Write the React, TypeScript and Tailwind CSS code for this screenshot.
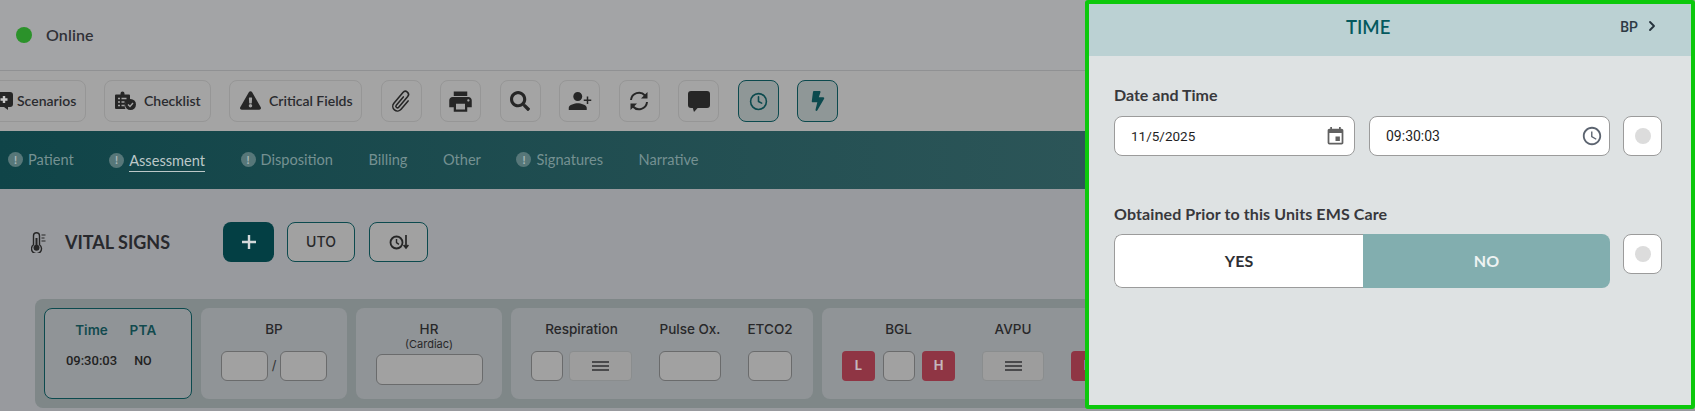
import React from "react";
import { FaExclamationTriangle, FaSearch, FaBolt } from "react-icons/fa";
import { BsPaperclip } from "react-icons/bs";
import { IoMdPersonAdd } from "react-icons/io";
import { MdEvent, MdAccessTime, MdLocalPrintshop } from "react-icons/md";
import { ChevronRight, Clock } from "lucide-react";

const ToolBtn = ({ children, active }: { children: React.ReactNode; active?: boolean }) => (
  <div
    className={
      active
        ? "w-[41px] h-[42px] shrink-0 rounded-lg border border-[#0c4a4e] bg-[#8f9797] flex items-center justify-center text-[#0c4a4e]"
        : "w-[41px] h-[42px] shrink-0 rounded-lg border border-[#969696] flex items-center justify-center text-[#262626]"
    }
  >
    {children}
  </div>
);

const Alert = () => (
  <span className="w-[15px] h-[15px] rounded-full bg-[#577779] text-[#aab9ba] text-[11px] font-bold flex items-center justify-center">!</span>
);

const Tab = ({ label, alert, active }: { label: string; alert?: boolean; active?: boolean }) => (
  <div className="flex items-center gap-[5px]">
    {alert && <Alert />}
    <span className={active ? "text-[#bcc8c8] border-b border-[#bcc8c8] leading-[19px] mt-[3px] pb-[1px]" : "text-[#759192]"}>{label}</span>
  </div>
);

const Menu = () => (
  <div className="h-[30px] rounded border border-[#8a8d8e] bg-[#9d9d9d] flex flex-col gap-[2px] items-center justify-center">
    <span className="w-[17px] h-[2px] bg-[#4a4a4c]" />
    <span className="w-[17px] h-[2px] bg-[#4a4a4c]" />
    <span className="w-[17px] h-[2px] bg-[#4a4a4c]" />
  </div>
);

const Inp = ({ w }: { w: string }) => (
  <div className={`${w} h-[30px] rounded-md border border-[#6a6b6c] bg-[#a1a1a1]`} />
);

const Red = ({ t }: { t: string }) => (
  <div className="w-[33px] h-[30px] rounded bg-[#8f3544] text-[#c4b7bc] text-[13px] font-bold flex items-center justify-center">{t}</div>
);

const Label = ({ children }: { children: React.ReactNode }) => (
  <div className="text-[13.5px] font-medium leading-[16px] text-[#28282a] whitespace-nowrap mb-[14px]">{children}</div>
);

const Toggle = () => (
  <div className="w-[39px] h-[40px] shrink-0 rounded-lg border border-[#9b9b9b] bg-white flex items-center justify-center">
    <span className="w-[16px] h-[16px] rounded-full bg-[#dcdcdc]" />
  </div>
);

export default function App() {
  return (
    <div className="relative w-full h-screen overflow-hidden bg-[#989a9e] font-['Lato',sans-serif]">
      <div className="h-[70px] bg-[#a3a4a6] flex items-center pl-[16px] gap-[14px]">
        <span className="w-[16px] h-[16px] rounded-full bg-[#2b922a]" />
        <span className="text-[16px] font-semibold tracking-[0.1px] text-[#303136]">Online</span>
      </div>
      <div className="h-[61px] border-t border-[#909193] bg-[#a4a4a4] pt-[9px] flex gap-[18.5px] text-[14px] font-semibold text-[#2a2b2f] -ml-[14px]">
        <div className="w-[100px] h-[42px] shrink-0 rounded-lg border border-[#969696] flex items-center gap-[4px] pl-[8px] pb-[1px]">
          <svg width="18" height="20" viewBox="0 0 18 20" className="shrink-0">
            <rect x="0" y="1" width="18" height="15" rx="3" fill="#262626" />
            <path d="M9 16h4v3z" fill="#262626" />
            <path d="M9 5v7M5.5 8.5h7" stroke="#c8c8c8" strokeWidth="2.4" />
          </svg>
          <span>Scenarios</span>
        </div>
        <div className="w-[107px] -ml-[0.5px] h-[42px] shrink-0 rounded-lg border border-[#969696] flex items-center gap-[8px] pl-[10px] pb-[1px]">
          <svg width="21" height="19" viewBox="0 0 21 19" className="shrink-0">
            <path d="M1 3.5h4.5V2.5a2 2 0 0 1 4 0v1H14a1 1 0 0 1 1 1V9a6 6 0 0 0-4.5 9H1a1 1 0 0 1-1-1V4.5a1 1 0 0 1 1-1z" fill="#262626" />
            <path d="M3 7.5h2M6.5 7.5h5M3 11h2M6.5 11h3M3 14.5h2M6.5 14.5h3" stroke="#a4a4a4" strokeWidth="1.3" />
            <circle cx="15.5" cy="13.5" r="5.5" fill="#262626" />
            <path d="M13 13.5l2 2 3-3.5" stroke="#a4a4a4" strokeWidth="1.4" fill="none" />
          </svg>
          <span>Checklist</span>
        </div>
        <div className="w-[133px] -ml-[0.5px] h-[42px] shrink-0 rounded-lg border border-[#969696] flex items-center gap-[8px] pl-[10px] pb-[1px]">
          <FaExclamationTriangle size={21} color="#262626" className="shrink-0" />
          <span>Critical Fields</span>
        </div>
        <ToolBtn><BsPaperclip size={25} className="rotate-[40deg]" /></ToolBtn>
        <ToolBtn><MdLocalPrintshop size={27} /></ToolBtn>
        <ToolBtn><FaSearch size={20} /></ToolBtn>
        <ToolBtn><IoMdPersonAdd size={24} className="-scale-x-100" /></ToolBtn>
        <ToolBtn>
          <svg width="22" height="22" viewBox="0 0 22 22" fill="none">
            <path d="M3 10a8 8 0 0 1 14-4.5" stroke="#262626" strokeWidth="2" />
            <path d="M19.5 2v6.5H13z" fill="#262626" />
            <path d="M19 12a8 8 0 0 1-14 4.5" stroke="#262626" strokeWidth="2" />
            <path d="M2.5 20v-6.5H9z" fill="#262626" />
          </svg>
        </ToolBtn>
        <ToolBtn>
          <svg width="22" height="21" viewBox="0 0 22 21">
            <rect x="0" y="0" width="22" height="17" rx="3" fill="#262626" />
            <path d="M4.5 16h6l-4.5 5z" fill="#262626" />
          </svg>
        </ToolBtn>
        <ToolBtn active><Clock size={19} strokeWidth={2} /></ToolBtn>
        <ToolBtn active><FaBolt size={20} /></ToolBtn>
      </div>
      <div className="h-[58px] bg-gradient-to-r from-[#0f4448] to-[#3a5f61] flex items-center pl-[8px] gap-[35.5px] text-[14.6px]">
        <Tab label="Patient" alert />
        <Tab label="Assessment" alert active />
        <Tab label="Disposition" alert />
        <Tab label="Billing" />
        <Tab label="Other" />
        <Tab label="Signatures" alert />
        <Tab label="Narrative" />
      </div>

      <div className="mt-[33px] h-[40px] flex items-center pl-[31px]">
        <svg width="16" height="21" viewBox="0 0 16 21" className="shrink-0" fill="none">
          <path d="M2.5 12V3a3 3 0 0 1 6 0v9a5 5 0 1 1-6 0z" stroke="#262626" strokeWidth="1.4" transform="translate(0 .7)" />
          <circle cx="5.5" cy="15.7" r="3" fill="#262626" />
          <path d="M5.5 6v8" stroke="#262626" strokeWidth="2" />
          <path d="M10.5 3h4M10.5 6h3M10.5 9h4" stroke="#262626" strokeWidth="1.2" />
        </svg>
        <span className="ml-[18px] w-[158px] text-[18px] font-bold text-[#28292d]">VITAL SIGNS</span>
        <div className="w-[51px] h-[40px] rounded-lg bg-[#033f44] text-[#d4d9da] flex items-center justify-center">
          <svg width="14" height="14" viewBox="0 0 14 14"><path d="M7 0v14M0 7h14" stroke="currentColor" strokeWidth="2.4" /></svg>
        </div>
        <div className="ml-[13px] w-[68px] h-[40px] rounded-lg border border-[#0c4a4e] bg-[#a1a1a1] text-[14px] font-medium text-[#28282a] font-['Inter',sans-serif] flex items-center justify-center pb-[1px]">UTO</div>
        <div className="ml-[14px] w-[59px] h-[40px] rounded-lg border border-[#0c4a4e] bg-[#a1a1a1] flex items-center justify-center">
          <svg width="20" height="16" viewBox="0 0 20 16" fill="none" stroke="#262626">
            <circle cx="7.5" cy="8.5" r="6" strokeWidth="1.8" />
            <path d="M7.5 5v3.7l2.4 1.6" strokeWidth="1.4" />
            <path d="M17 1v12.5M14.6 11l2.4 3 2.4-3" strokeWidth="1.7" />
          </svg>
        </div>
      </div>

      <div className="mt-[37px] ml-[35px] w-[1100px] h-[109px] rounded-lg bg-[#7f8788] p-[9px] flex gap-[9px] font-['Inter',sans-serif]">
        <div className="w-[148px] h-[91px] shrink-0 rounded-lg border border-[#0c4a4e] pt-[13px] pl-[22px] flex gap-[12px] bg-[#909497]">
          <div className="w-[49px] flex flex-col items-center">
            <span className="text-[13.5px] font-semibold leading-[16px] text-[#124a4e] mb-[15px]">Time</span>
            <span className="text-[13px] font-medium leading-[16px] text-[#222] font-['Roboto',sans-serif] whitespace-nowrap">09:30:03</span>
          </div>
          <div className="w-[30px] flex flex-col items-center">
            <span className="text-[13.5px] font-semibold leading-[16px] tracking-[0.3px] text-[#124a4e] mb-[15px]">PTA</span>
            <span className="text-[12.5px] font-medium leading-[16px] text-[#222] font-['Roboto',sans-serif]">NO</span>
          </div>
        </div>
        <div className="w-[146px] shrink-0 rounded-lg bg-[#909497] pt-[13px] flex flex-col items-center">
          <Label>BP</Label>
          <div className="flex items-center gap-[4px] text-[13px] text-[#333]">
            <Inp w="w-[47px]" /><span>/</span><Inp w="w-[47px]" />
          </div>
        </div>
        <div className="w-[146px] shrink-0 rounded-lg bg-[#909497] pt-[13px] flex flex-col items-center">
          <div className="text-[13.5px] font-medium leading-[16px] text-[#28282a]">HR</div>
          <div className="text-[11px] leading-[15px] text-[#28282a]">(Cardiac)</div>
          <div className="mt-[2px] w-[107px] h-[31px] rounded-md border border-[#6a6b6c] bg-[#a1a1a1]" />
        </div>
        <div className="w-[302px] shrink-0 rounded-lg bg-[#909497] pt-[13px] pl-[20px] flex gap-[27px]">
          <div className="w-[101px] flex flex-col items-center">
            <Label>Respiration</Label>
            <div className="flex gap-[6px] w-full">
              <Inp w="w-[32px]" />
              <div className="flex-1"><Menu /></div>
            </div>
          </div>
          <div className="w-[62px] flex flex-col items-center">
            <Label>Pulse Ox.</Label>
            <Inp w="w-[62px]" />
          </div>
          <div className="w-[44px] flex flex-col items-center">
            <Label>ETCO2</Label>
            <Inp w="w-[44px]" />
          </div>
        </div>
        <div className="flex-1 rounded-lg bg-[#909497] pt-[13px] pl-[20px] flex gap-[27px]">
          <div className="w-[113px] flex flex-col items-center">
            <Label>BGL</Label>
            <div className="flex gap-[7.5px]">
              <Red t="L" />
              <Inp w="w-[32px]" />
              <Red t="H" />
            </div>
          </div>
          <div className="w-[62px] flex flex-col items-center">
            <Label>AVPU</Label>
            <div className="w-full"><Menu /></div>
          </div>
          <div className="pt-[30px]"><Red t="L" /></div>
        </div>
      </div>

      <div className="absolute left-[1085px] right-0 top-0 h-[409px] border-4 border-[#0cc90c] rounded-[3px] bg-[#dee2e3]">
        <div className="h-[52px] bg-[#bbd1d3] flex items-center pl-[257px] pr-[31px] pb-[5px]">
          <span className="text-[18.5px] font-semibold text-[#04595e]">TIME</span>
          <span className="ml-auto text-[14px] font-medium text-[#2e3a44] font-['Roboto',sans-serif]">BP</span>
          <ChevronRight size={16} strokeWidth={2.8} className="ml-[6px] -mt-[3px] text-[#26333d]" />
        </div>
        <div className="pl-[25px] pt-[30px]">
          <div className="text-[16px] font-bold leading-[18px] text-[#38383c]">Date and Time</div>
          <div className="mt-[12px] flex items-center font-['Roboto',sans-serif] text-[13.5px] text-[#1f1f1f]">
            <div className="w-[240.5px] h-[40px] rounded-lg border border-[#9b9b9b] bg-white flex items-center justify-between pl-[16px] pr-[8px]">
              <span>11/5/2025</span>
              <MdEvent size={21} color="#616161" />
            </div>
            <div className="ml-[14.5px] w-[241px] h-[40px] rounded-lg border border-[#9b9b9b] bg-white flex items-center justify-between pl-[16px] pr-[6px]">
              <span className="text-[14px]">09:30:03</span>
              <MdAccessTime size={22} color="#5c6470" />
            </div>
            <div className="ml-[13px]"><Toggle /></div>
          </div>
          <div className="mt-[49px] text-[16px] font-bold tracking-[0.1px] leading-[18px] text-[#38383c]">Obtained Prior to this Units EMS Care</div>
          <div className="mt-[11px] flex items-start">
            <div className="w-[496px] h-[54px] rounded-lg flex overflow-hidden text-[16px] font-bold">
              <div className="w-[249px] border border-r-0 border-[#9b9b9b] rounded-l-lg bg-white text-[#2e2f33] flex items-center justify-center">YES</div>
              <div className="flex-1 bg-[#82aeaf] text-[#eef3f3] flex items-center justify-center">NO</div>
            </div>
            <div className="ml-[13px]"><Toggle /></div>
          </div>
        </div>
      </div>
    </div>
  );
}
